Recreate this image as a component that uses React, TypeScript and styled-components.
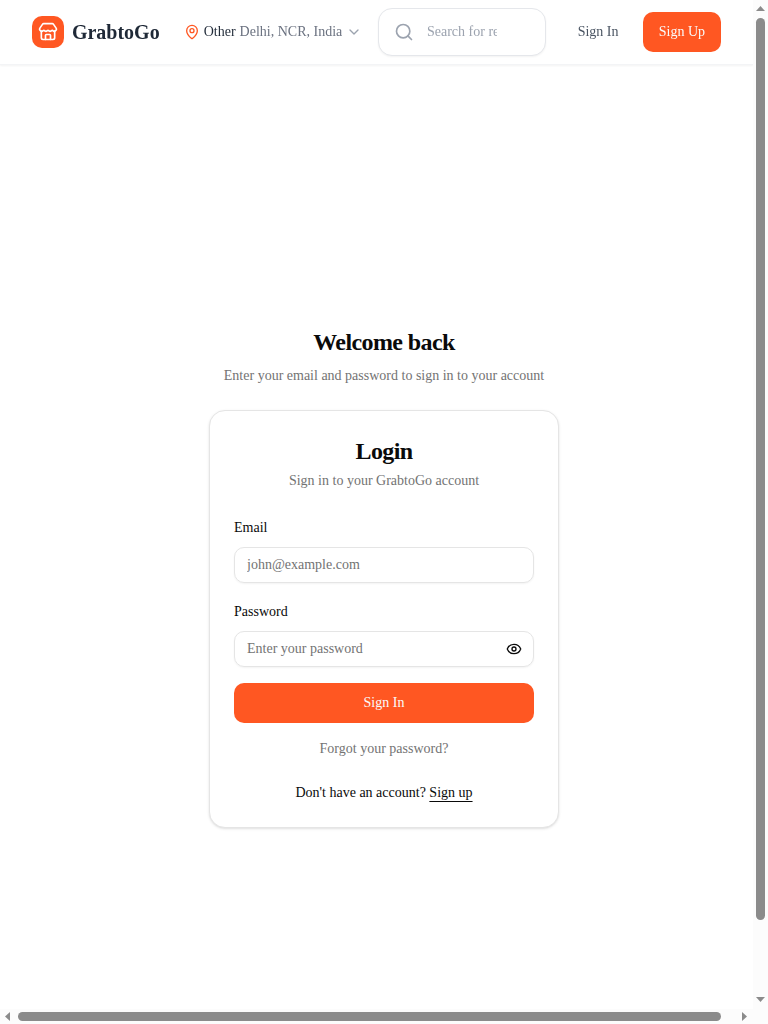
import React from "react";
import styled, { createGlobalStyle } from "styled-components";
import { ChevronDown, Eye, MapPin, Search, Store } from "lucide-react";

const GlobalStyle = createGlobalStyle`
  *, *::before, *::after { box-sizing: border-box; }
  html, body { margin: 0; height: 1024px; overflow: hidden; background: #fff; }
  body {
    font-family: "Liberation Serif", serif;
    font-size: 16px;
    line-height: 24px;
    color: #0a0a0a;
  }
  h1, h2, p { margin: 0; }
  button, input { font: inherit; }
  svg { display: block; flex-shrink: 0; }
`;

const Window = styled.div`
  display: grid;
  grid-template-columns: 753px 15px;
  grid-template-rows: 1009px 15px;
  width: 768px;
  height: 1024px;
  overflow: hidden;
`;

const Viewport = styled.div`
  overflow: hidden;
  min-width: 0;
`;

const Header = styled.header`
  display: flex;
  align-items: center;
  width: 753px;
  height: 65px;
  padding: 0 32px;
  border-bottom: 1px solid #f3f4f6;
  box-shadow: 0 1px 2px rgba(0, 0, 0, 0.05);
  background: #fff;
  will-change: transform;
`;

const Brand = styled.div`
  display: flex;
  align-items: center;
  gap: 8px;
  width: 127.7px;
  font-size: 20px;
  line-height: 28px;
  font-weight: 700;
  color: #1f2937;
`;

const Logo = styled.span`
  display: flex;
  align-items: center;
  justify-content: center;
  width: 32px;
  height: 32px;
  border-radius: 10px;
  background: #ff5722;
  color: #fff;
`;

const Location = styled.div`
  display: flex;
  align-items: center;
  gap: 4px;
  width: 178.3px;
  margin-left: 24px;
  font-size: 14px;
  line-height: 20px;
  color: #6b7280;
  white-space: nowrap;
`;

const LocationLabel = styled.span`
  color: #1f2937;
`;

const LocationName = styled.span`
  margin-right: -0.5px;
`;

const SearchBox = styled.label`
  display: flex;
  align-items: center;
  gap: 13px;
  width: 168px;
  height: 48px;
  margin-left: 16px;
  padding: 0 15px;
  border: 1px solid #e5e7eb;
  border-radius: 14px;
  box-shadow: 0 1px 2px rgba(0, 0, 0, 0.05);
  background: #fff;
  color: #9ca3af;
`;

const SearchInput = styled.input`
  width: 70px;
  height: 20px;
  padding: 0;
  border: 0;
  outline: 0;
  background: transparent;
  font-size: 14px;
  line-height: 20px;
  &::placeholder { color: #9ca3af; opacity: 1; }
`;

const HeaderLink = styled.a`
  margin-left: 31.7px;
  width: 41.3px;
  white-space: nowrap;
  font-size: 14px;
  line-height: 20px;
  color: #4b5563;
`;

const Button = styled.button<{ $block?: boolean }>`
  height: 40px;
  width: ${(p) => (p.$block ? "100%" : "78px")};
  margin-left: ${(p) => (p.$block ? "0" : "24px")};
  padding: 0;
  border: 0;
  border-radius: 10px;
  background: #ff5722;
  color: #fafafa;
  font-size: 14px;
  line-height: 20px;
`;

const Main = styled.main`
  display: flex;
  flex-direction: column;
  align-items: center;
  justify-content: center;
  gap: 24px;
  width: 768px;
  height: 1024px;
`;

const Intro = styled.div`
  display: flex;
  flex-direction: column;
  gap: 8px;
  text-align: center;
`;

const Title = styled.h1`
  font-size: 24px;
  line-height: 32px;
  font-weight: 600;
  letter-spacing: -0.6px;
`;

const Muted = styled.p`
  font-size: 14px;
  line-height: 20px;
  color: #737373;
`;

const Card = styled.section`
  display: flex;
  flex-direction: column;
  gap: 24px;
  width: 350px;
  padding: 24px;
  border: 1px solid #e5e5e5;
  border-radius: 16px;
  background: #fff;
  box-shadow: 0 1px 3px rgba(0, 0, 0, 0.1), 0 1px 2px -1px rgba(0, 0, 0, 0.1);
`;

const CardHeader = styled.div`
  display: flex;
  flex-direction: column;
  gap: 4px;
  text-align: center;
`;

const Form = styled.div`
  display: flex;
  flex-direction: column;
  gap: 16px;
`;

const Field = styled.div`
  display: flex;
  flex-direction: column;
  gap: 8px;
`;

const LabelRow = styled.div`
  height: 24px;
`;

const Label = styled.label`
  font-size: 14px;
  line-height: 14px;
`;

const InputFrame = styled.div`
  display: flex;
  align-items: center;
  height: 36px;
  padding: 0 11px 0 12px;
  border: 1px solid #e5e5e5;
  border-radius: 10px;
  box-shadow: 0 1px 2px rgba(0, 0, 0, 0.05);
`;

const Input = styled.input`
  flex: 1;
  min-width: 0;
  height: 26px;
  padding: 0;
  border: 0;
  outline: 0;
  background: transparent;
  font-size: 14px;
  &::placeholder { color: #737373; opacity: 1; }
`;

const Forgot = styled(Muted)`
  text-align: center;
`;

const Footer = styled.p`
  font-size: 14px;
  line-height: 20px;
  text-align: center;
`;

const SignUpLink = styled.a`
  text-decoration: underline;
  text-underline-offset: 4px;
`;

const ScrollTrack = styled.div<{ $horizontal?: boolean }>`
  display: flex;
  flex-direction: ${(p) => (p.$horizontal ? "row" : "column")};
  align-items: center;
  justify-content: space-between;
  padding: ${(p) => (p.$horizontal ? "0 6px 0 5px" : "6px 0 7px")};
  background: #fcfcfc;
`;

const ScrollThumb = styled.div<{ $horizontal?: boolean }>`
  width: ${(p) => (p.$horizontal ? "703px" : "9px")};
  height: ${(p) => (p.$horizontal ? "9px" : "902px")};
  margin: ${(p) => (p.$horizontal ? "0 auto 0 8px" : "7px 0 auto")};
  border-radius: 5px;
  background: #8b8b8b;
`;

const ScrollCorner = styled.div`
  background: #fcfcfc;
`;

const paths = {
  up: "M0 5 L4.5 0 L9 5Z",
  down: "M0 0 L9 0 L4.5 5Z",
  left: "M5 0 L5 9 L0 4.5Z",
  right: "M0 0 L5 4.5 L0 9Z",
};

function Arrow({ dir }: { dir: keyof typeof paths }) {
  const vertical = dir === "up" || dir === "down";
  return (
    <svg width={vertical ? 9 : 5} height={vertical ? 5 : 9} fill="#8b8b8b">
      <path d={paths[dir]} />
    </svg>
  );
}

export default function App() {
  return (
    <>
      <GlobalStyle />
      <Window>
        <Viewport>
          <Header>
            <Brand>
              <Logo><Store size={20} /></Logo>
              GrabtoGo
            </Brand>
            <Location>
              <MapPin size={16} color="#ff5722" />
              <LocationLabel>Other</LocationLabel>
              <LocationName>Delhi, NCR, India</LocationName>
              <ChevronDown size={16} color="#9ca3af" />
            </Location>
            <SearchBox>
              <Search size={20} />
              <SearchInput placeholder="Search for restaurants" />
            </SearchBox>
            <HeaderLink>Sign In</HeaderLink>
            <Button>Sign Up</Button>
          </Header>
          <Main>
            <Intro>
              <Title>Welcome back</Title>
              <Muted>Enter your email and password to sign in to your account</Muted>
            </Intro>
            <Card>
              <CardHeader>
                <Title as="h2">Login</Title>
                <Muted>Sign in to your GrabtoGo account</Muted>
              </CardHeader>
              <Form>
                <Field>
                  <LabelRow><Label htmlFor="email">Email</Label></LabelRow>
                  <InputFrame>
                    <Input id="email" placeholder="john@example.com" />
                  </InputFrame>
                </Field>
                <Field>
                  <LabelRow><Label htmlFor="password">Password</Label></LabelRow>
                  <InputFrame>
                    <Input id="password" type="password" placeholder="Enter your password" />
                    <Eye size={16} />
                  </InputFrame>
                </Field>
                <Button $block>Sign In</Button>
                <Forgot>Forgot your password?</Forgot>
              </Form>
              <Footer>
                Don't have an account? <SignUpLink>Sign up</SignUpLink>
              </Footer>
            </Card>
          </Main>
        </Viewport>
        <ScrollTrack>
          <Arrow dir="up" />
          <ScrollThumb />
          <Arrow dir="down" />
        </ScrollTrack>
        <ScrollTrack $horizontal>
          <Arrow dir="left" />
          <ScrollThumb $horizontal />
          <Arrow dir="right" />
        </ScrollTrack>
        <ScrollCorner />
      </Window>
    </>
  );
}
